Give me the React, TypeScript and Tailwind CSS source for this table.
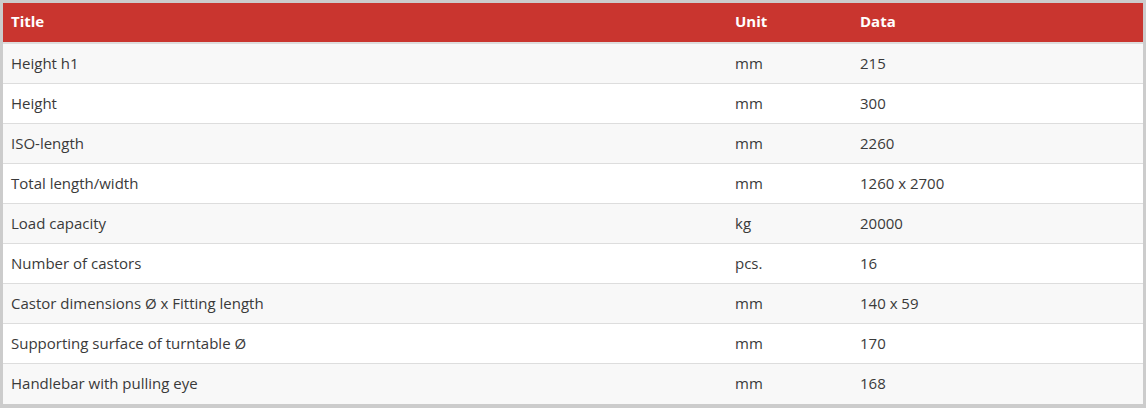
import React from 'react';

const rows: [string, string, string][] = [
    ['Height h1', 'mm', '215'],
    ['Height', 'mm', '300'],
    ['ISO-length', 'mm', '2260'],
    ['Total length/width', 'mm', '1260 x 2700'],
    ['Load capacity', 'kg', '20000'],
    ['Number of castors', 'pcs.', '16'],
    ['Castor dimensions Ø x Fitting length', 'mm', '140 x 59'],
    ['Supporting surface of turntable Ø', 'mm', '170'],
    ['Handlebar with pulling eye', 'mm', '168'],
];

const App: React.FC = () => {
    return (
        <div className="w-[1146px] h-[408px] bg-white border-[3px] border-b-4 border-[#cccccc] font-['Open_Sans','Lato',sans-serif]">
            <div className="grid grid-cols-[724px_125px_1fr] h-[41px] items-center pb-[3px] bg-[#c9352f] text-white text-[15px] font-bold border-b-2 border-[#dddddd] box-border">
                <div className="px-2">Title</div>
                <div className="px-2">Unit</div>
                <div className="px-2">Data</div>
            </div>
            {rows.map((r, i) => (
                <div
                    key={r[0]}
                    className={`grid grid-cols-[724px_125px_1fr] h-[40px] items-center pb-px text-[15px] text-[#3a3a3a] ${i % 2 === 0 ? 'bg-[#f8f8f8]' : 'bg-white'} ${i < rows.length - 1 ? 'border-b border-[#dddddd]' : ''}`}
                >
                    <div className="px-2">{r[0]}</div>
                    <div className="px-2">{r[1]}</div>
                    <div className="px-2">{r[2]}</div>
                </div>
            ))}
        </div>
    );
};

export default App;
